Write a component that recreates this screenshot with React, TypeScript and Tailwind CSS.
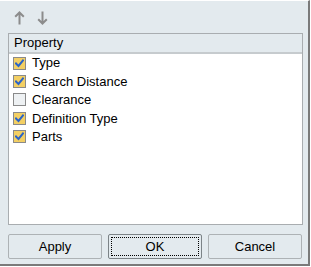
import { useState } from 'react';

const PROPS = [
  { key: 'type', label: 'Type', checked: true },
  { key: 'search', label: 'Search Distance', checked: true },
  { key: 'clearance', label: 'Clearance', checked: false },
  { key: 'deftype', label: 'Definition Type', checked: true },
  { key: 'parts', label: 'Parts', checked: true },
];

function CheckBox({ checked }: { checked: boolean }) {
  return (
    <span
      className={`w-[13px] h-[13px] border border-[#8a8a8a] flex items-center justify-center shrink-0 ${
        checked ? 'bg-[#f3cf63]' : 'bg-[#eef1f3]'
      }`}
    >
      {checked && (
        <svg width="9" height="9" viewBox="0 0 9 9" fill="none">
          <path d="M1 4.5 L3.5 7 L8 1.5" stroke="#2a64c8" strokeWidth="2" strokeLinecap="square" />
        </svg>
      )}
    </span>
  );
}

function Arrow({ down }: { down?: boolean }) {
  return (
    <svg width="11" height="14" viewBox="0 0 11 14" fill="none" className={down ? 'rotate-180' : ''}>
      <path d="M5.5 1.5 V13.5 M1.2 5.8 L5.5 1.5 L9.8 5.8" stroke="#8c8c8c" strokeWidth="2" />
    </svg>
  );
}

export default function App() {
  const [items, setItems] = useState(PROPS);

  return (
    <div className="w-[311px] h-[267px] bg-white" style={{ fontFamily: '"Liberation Sans", Arial, sans-serif' }}>
      <div className="w-[310px] h-[266px] bg-[#e3eaee] border-t border-t-white border-r-2 border-r-[#7a7a7a] border-b-2 border-b-[#7a7a7a] flex flex-col">
        <div className="h-[32px] flex items-center gap-[12px] pl-[14px] pt-[2px]">
          <Arrow />
          <Arrow down />
        </div>

        <div className="ml-[8px] w-[295px] h-[192px] border border-[#a9adb0] bg-white flex flex-col">
          <div className="h-[20px] bg-[#e3eaee] border-b-2 border-b-[#c6cbce] flex items-center pl-[5px] text-[13px] text-black">
            Property
          </div>
          <div className="flex flex-col">
            {items.map((it, i) => (
              <div
                key={it.key}
                className="h-[18.4px] flex items-center gap-[6px] pl-[4px] text-[13px] text-black cursor-default"
                onClick={() =>
                  setItems(items.map((x, j) => (j === i ? { ...x, checked: !x.checked } : x)))
                }
              >
                <CheckBox checked={it.checked} />
                <span>{it.label}</span>
              </div>
            ))}
          </div>
        </div>

        <div className="flex gap-[6px] pl-[8px] mt-[9px]">
          <button className="w-[94px] h-[25px] border border-[#adb2b5] rounded-[2px] bg-[#e3eaee] text-[13px] text-black">
            Apply
          </button>
          <button className="w-[94px] h-[25px] border border-[#7c8387] rounded-[2px] bg-[#e3eaee] text-[13px] text-black flex items-center justify-center">
            <span className="w-[88px] h-[19px] border border-dotted border-black flex items-center justify-center">OK</span>
          </button>
          <button className="w-[94px] h-[25px] border border-[#adb2b5] rounded-[2px] bg-[#e3eaee] text-[13px] text-black">
            Cancel
          </button>
        </div>
      </div>
    </div>
  );
}
